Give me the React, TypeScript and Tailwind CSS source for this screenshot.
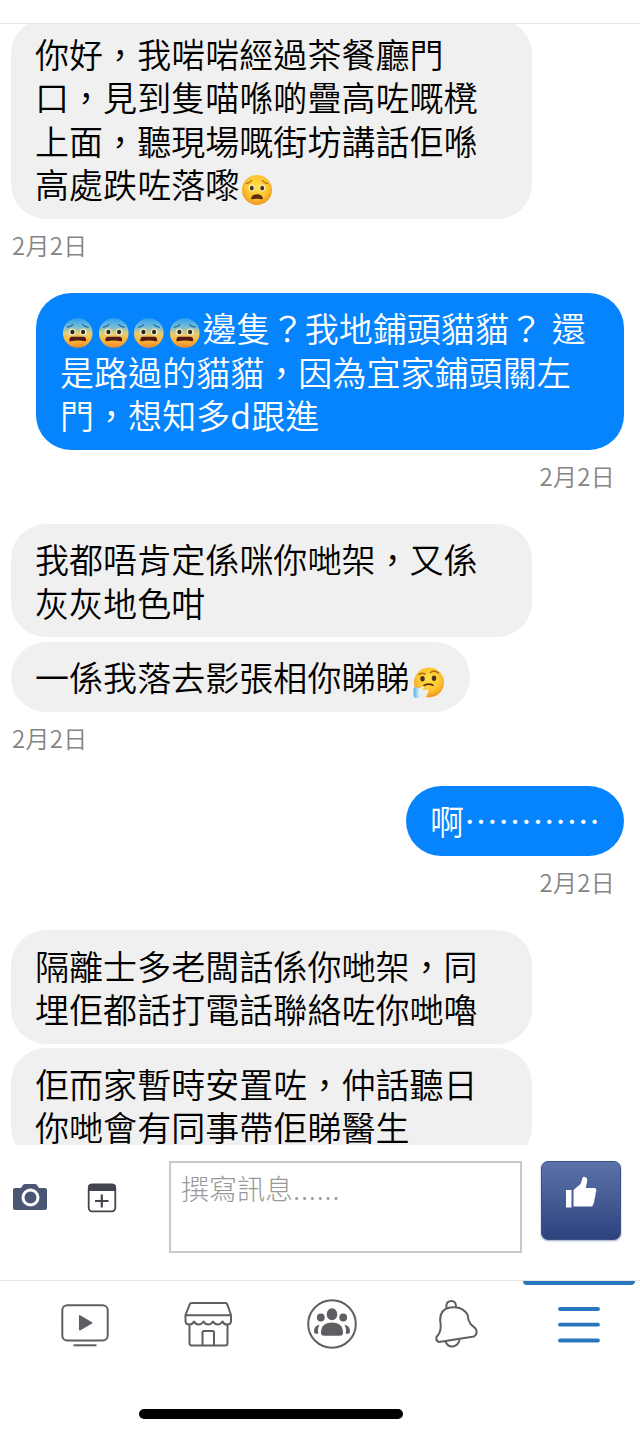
import type { ReactNode } from 'react';

function WorriedFace() {
  return (
    <svg viewBox="0 0 36 36" className="mt-[10px] h-9 w-9 shrink-0" aria-label="😧">
      <defs>
        <radialGradient id="worried" cx="50%" cy="40%" r="62%">
          <stop offset="0" stopColor="#ffe04a" />
          <stop offset="0.6" stopColor="#fdc62f" />
          <stop offset="1" stopColor="#ee8f22" />
        </radialGradient>
      </defs>
      <circle cx="18" cy="18" r="15" fill="url(#worried)" />
      <ellipse cx="12.7" cy="16" rx="3.1" ry="3.4" fill="#fff3b8" />
      <ellipse cx="23.3" cy="16" rx="3.1" ry="3.4" fill="#fff3b8" />
      <ellipse cx="12.8" cy="16.2" rx="1.9" ry="2.4" fill="#47301c" />
      <ellipse cx="23.2" cy="16.2" rx="1.9" ry="2.4" fill="#47301c" />
      <path d="M7.500 11.500q3.500-.4 5-3M28.500 11.500q-3.500-.4-5-3" fill="none" stroke="#b4701b" strokeWidth="1.300" strokeLinecap="round" />
      <path d="M12 26.500q1-4.300 6-4.300t6 4.300q0 1-1.200.8-4.800-1-9.600 0-1.200.2-1.200-.8z" fill="#5c2b12" />
    </svg>
  );
}

function AnxiousFace() {
  return (
    <svg viewBox="0 0 36 36" className="mt-[9px] h-9 w-[35.5px] shrink-0" aria-label="😰">
      <defs>
        <linearGradient id="anxious" x1="0" y1="0" x2="0" y2="1">
          <stop offset="0" stopColor="#2f9ff0" />
          <stop offset="0.3" stopColor="#77bdd5" />
          <stop offset="0.52" stopColor="#e5cd70" />
          <stop offset="0.75" stopColor="#fdb63a" />
          <stop offset="1" stopColor="#f2892b" />
        </linearGradient>
      </defs>
      <circle cx="18" cy="18" r="15" fill="url(#anxious)" />
      <path d="M7.500 12q4-.3 5.500-2.600M28.500 12q-4-.3-5.500-2.600" fill="none" stroke="#19669d" strokeWidth="1.200" strokeLinecap="round" />
      <ellipse cx="12.300" cy="17" rx="3.500" ry="3.500" fill="#efe9c0" />
      <ellipse cx="23.700" cy="17" rx="3.500" ry="3.500" fill="#efe9c0" />
      <ellipse cx="12.600" cy="17" rx="2.100" ry="2.300" fill="#2d2522" />
      <ellipse cx="23.400" cy="17" rx="2.100" ry="2.300" fill="#2d2522" />
      <path d="M9.500 25.600q0-3.700 2.500-3.700h12q2.500 0 2.500 3.700 0 1.100-1.200.7-7.300-1.300-14.600 0-1.200.4-1.200-.7z" fill="#551b12" />
    </svg>
  );
}

function ThinkingFace() {
  return (
    <svg viewBox="0 0 36 36" className="mt-[10px] ml-px h-9 w-9 shrink-0" aria-label="🤔">
      <defs>
        <radialGradient id="thinking" cx="50%" cy="38%" r="64%">
          <stop offset="0" stopColor="#ffe04a" />
          <stop offset="0.6" stopColor="#fdc62f" />
          <stop offset="1" stopColor="#ee8f22" />
        </radialGradient>
        <linearGradient id="hand" x1="0" y1="0" x2="1" y2="0">
          <stop offset="0" stopColor="#4faee6" />
          <stop offset="0.4" stopColor="#e3f3fb" />
          <stop offset="1" stopColor="#f3ead6" />
        </linearGradient>
      </defs>
      <circle cx="18" cy="17.500" r="15" fill="url(#thinking)" />
      <path d="M8 9.500q3-2 6-.5M19.500 7.500q4-2.700 8 .5" fill="none" stroke="#a96714" strokeWidth="1.500" strokeLinecap="round" />
      <ellipse cx="11.500" cy="13.800" rx="2.200" ry="2.700" fill="#47301c" />
      <ellipse cx="23" cy="13.200" rx="2.200" ry="2.700" fill="#47301c" />
      <path d="M13 20.500q4.500-2.500 9-.3" fill="none" stroke="#5b3415" strokeWidth="1.800" strokeLinecap="round" />
      <path d="M2.500 24.500q0-3 2.500-2.500l3 1.500 4-2.300q2 .4.700 2.300l-2.200 1.500 5.500-.4q3 1 1 3-1 5-5 5.400H5Q2.500 33 2.500 30z" fill="url(#hand)" />
    </svg>
  );
}

function Line({ children }: { children: ReactNode }) {
  return <div className="flex h-[43.4px] items-start whitespace-pre leading-[43.4px] tracking-[0.05px]">{children}</div>;
}

function Incoming({ children, className = 'w-[521px]' }: { children: ReactNode; className?: string }) {
  return (
    <div className={`shrink-0 rounded-[35px] bg-[#f0f0f0] px-6 py-[13.4px] text-[34px] text-black ${className}`}>
      {children}
    </div>
  );
}

function Outgoing({ children, className = '' }: { children: ReactNode; className?: string }) {
  return (
    <div className={`shrink-0 self-end rounded-[35px] bg-[#0584fe] px-6 py-[13.4px] text-[34px] text-white ${className}`}>
      {children}
    </div>
  );
}

function Stamp({ right = false }: { right?: boolean }) {
  return (
    <div className={`h-[74px] shrink-0 pt-[8px] text-[24px] leading-[36px] tracking-[0.3px] text-[#858585] ${right ? 'self-end pr-[9px]' : 'pl-px'}`}>
      2月2日
    </div>
  );
}

function Conversation() {
  return (
    <main className="h-[1122px] shrink-0 overflow-hidden border-t border-[#e4e4e4]">
      <div className="-mt-[5.500px] flex flex-col pr-4 pl-[11px]">
        <Incoming>
          <Line>你好，我啱啱經過茶餐廳門</Line>
          <Line>口，見到隻喵喺啲疊高咗嘅櫈</Line>
          <Line>上面，聽現場嘅街坊講話佢喺</Line>
          <Line>高處跌咗落嚟<WorriedFace /></Line>
        </Incoming>
        <Stamp />
        <Outgoing className="w-[588px]">
          <Line>
            <AnxiousFace /><AnxiousFace /><AnxiousFace /><AnxiousFace />
            <span className="ml-[0.5px] [word-spacing:1px]">邊隻？我地鋪頭貓貓？ 還</span>
          </Line>
          <Line>是路過的貓貓，因為宜家鋪頭關左</Line>
          <Line>門，想知多d跟進</Line>
        </Outgoing>
        <Stamp right />
        <Incoming>
          <Line>我都唔肯定係咪你哋架，又係</Line>
          <Line>灰灰地色咁</Line>
        </Incoming>
        <Incoming className="mt-[4.500px] w-[459px]">
          <Line>一係我落去影張相你睇睇<ThinkingFace /></Line>
        </Incoming>
        <Stamp />
        <Outgoing className="w-[218px]">
          <Line>啊…………</Line>
        </Outgoing>
        <Stamp right />
        <Incoming>
          <Line>隔離士多老闆話係你哋架，同</Line>
          <Line>埋佢都話打電話聯絡咗你哋嚕</Line>
        </Incoming>
        <Incoming className="mt-[4.500px] w-[521px]">
          <Line>佢而家暫時安置咗，仲話聽日</Line>
          <Line>你哋會有同事帶佢睇醫生</Line>
        </Incoming>
      </div>
    </main>
  );
}

function Composer() {
  return (
    <div className="flex h-[135px] shrink-0 items-start pt-4 pl-[13px]">
      <svg viewBox="0 0 34 26" className="mt-[23px] h-[26px] w-[34px]">
        <path d="M2 4h6l2-3q.7-1 2-1h10q1.300 0 2 1l2 3h6q2 0 2 2v18q0 2-2 2H2q-2 0-2-2V6q0-2 2-2z" fill="#4b5675" />
        <circle cx="17.500" cy="13.500" r="7.500" fill="none" stroke="#fff" strokeWidth="3" />
      </svg>
      <svg viewBox="0 0 30 30" className="mt-[22px] ml-10 h-[30px] w-[30px]" fill="none" stroke="#42454d">
        <rect x="1.700" y="1.500" width="26.600" height="26.800" rx="3.500" strokeWidth="1.800" />
        <path d="M1 8V4q0-3 3-3h22q3 0 3 3v4z" fill="#42454d" stroke="none" />
        <path d="M14.800 11.500v13M8 18h13.500" strokeWidth="2.200" />
      </svg>
      <div className="ml-[52px] h-[92px] w-[353px] border-2 border-[#c9c9c9] pt-[5px] pl-[10px] text-[28px] leading-10 font-light text-[#999]">
        撰寫訊息<span className="tracking-[0.9px]">......</span>
      </div>
      <button className="ml-[19px] flex h-[79px] w-20 justify-center rounded-[7px] border border-[#3c4f85] bg-linear-to-b from-[#5c73a9] to-[#2d437e] pt-[14px] shadow-[0_1px_2px_#9ca7c4]">
        <svg viewBox="0 0 32 32" className="h-8 w-8" fill="#fff">
          <rect x="1" y="14" width="5.500" height="17.500" />
          <path d="M8.500 14l7-6 2-6Q18.500.200 20.500 1.200q2.500 1.300 1.500 5L20.800 12h9q2 .5 1.500 3l-.7 2-.3 3-.7 3-.5 3-1 3q-.5 1.500-2.500 1.500H8.500z" />
        </svg>
      </button>
    </div>
  );
}

function TabBar() {
  return (
    <nav className="flex h-[154px] shrink-0 flex-col border-t border-[#e6e6e6]">
      <div className="ml-[523px] h-1 w-[112px] shrink-0 rounded-b-[4px] bg-[#2a76bd]" />
      <div className="flex h-[124px] items-start pt-[13px] pl-[61px]">
        <svg viewBox="0 0 48 48" className="mt-1 h-12 w-12" fill="none" stroke="#5d5f63" strokeWidth="2">
          <rect x="1.300" y="3.200" width="45.400" height="35.300" rx="5" />
          <path d="M12.500 43.300h23" />
          <path d="M18.700 13.800v14l12-7z" fill="#5d5f63" strokeWidth="1.500" strokeLinejoin="round" />
        </svg>
        <svg viewBox="0 0 48 48" className="mt-[3px] ml-[75px] h-12 w-12" fill="none" stroke="#5d5f63" strokeWidth="2" strokeLinejoin="round">
          <path d="M7.500 2h34q1.300 0 1.800 1.300L47 14v6q0 3.500-4.200 3.500-3 0-4.300-3-1.800 3-4.800 3t-4.700-3q-1.800 3-4.800 3t-4.700-3q-1.800 3-4.800 3t-4.700-3Q8.500 23.500 5.500 23.500 1.500 23.500 1.500 20v-6L5.700 3.300Q6.200 2 7.500 2zM2 14.300h45" />
          <path d="M5.500 23.500V42q0 2.500 2.500 2.500h33q2.500 0 2.500-2.500V23.500M18.500 44.500v-13q0-1.500 1.500-1.500h8.500q1.500 0 1.500 1.500v13" />
        </svg>
        <svg viewBox="0 0 50 50" className="mt-px ml-[75px] h-[50px] w-[50px]" fill="#5d5f63">
          <circle cx="25" cy="25" r="23.800" fill="none" stroke="#5d5f63" strokeWidth="2" />
          <ellipse cx="25" cy="15.300" rx="5.300" ry="6" />
          <circle cx="13.800" cy="18.500" r="3.900" />
          <circle cx="36.200" cy="18.500" r="3.900" />
          <path d="M14 34q0-10.500 11-10.500T36 34q0 2.800-3 2.800H17q-3 0-3-2.800z" />
          <path d="M12.600 25.700Q7 26.500 7 32.500q0 2.300 2 2.300h2.300q-1.300-4.800 1.300-9.100zM37.400 25.700q5.600.8 5.600 6.800 0 2.300-2 2.300h-2.300q1.300-4.800-1.300-9.100z" />
        </svg>
        <svg viewBox="0 0 44 50" className="mt-px ml-[78px] h-[50px] w-11" fill="none" stroke="#5d5f63" strokeWidth="2" strokeLinejoin="round">
          <path d="M4 43Q.500 42 1.500 38q3.500-3.500 4-8 .5-4-.3-8Q4.500 10.500 15 8.500q12-2 17.500 7 .5 6 3 9.500l5 4.500q3 5-1.500 8z" />
          <path d="M11.500 9.200Q10.500 2.200 16 2t5 6.500M10.500 42.400q2 5.800 7.500 5 5.500-.8 6.500-6.700" />
        </svg>
        <svg viewBox="0 0 42 38" className="mt-[8px] ml-[79px] h-[38px] w-[42px]" fill="none" stroke="#2a76bd" strokeWidth="3.800" strokeLinecap="round">
          <path d="M2 3h38M2 18.700h38M2 34.500h38" />
        </svg>
      </div>
      <div className="ml-[139px] h-[10px] w-[264px] rounded-full bg-black" />
    </nav>
  );
}

export default function App() {
  return (
    <div className="flex h-[1434px] w-[640px] flex-col overflow-hidden bg-white pt-[23px] font-['Noto_Sans_CJK_TC',sans-serif] font-[350]">
      <Conversation />
      <Composer />
      <TabBar />
    </div>
  );
}
